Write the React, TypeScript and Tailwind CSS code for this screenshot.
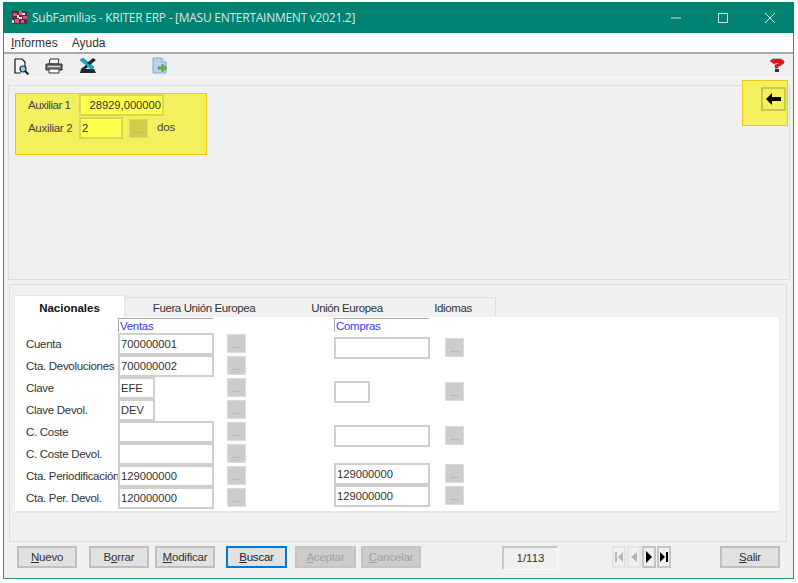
import React from "react";

const F = "font-['Liberation_Sans',Arial,sans-serif]";

function Input({ v = "", w = "w-[96px]", cls = "" }: { v?: string; w?: string; cls?: string }) {
  return (
    <div className={`${w} h-[22px] bg-white border-2 border-[#cfcfcf] pl-[1px] text-[11.2px] leading-[19px] text-[#333] ${cls}`}>{v}</div>
  );
}
function Dots({ cls = "" }: { cls?: string }) {
  return (
    <div className={`w-[19px] h-[19px] bg-[#cccccc] border border-[#dcdcdc] text-[#9a9a9a] text-[10px] leading-[20px] text-center ${cls}`}>...</div>
  );
}
function Row({ label, v, short }: { label: string; v?: string; short?: boolean }) {
  return (
    <div className="flex h-[22px] items-start">
      <div className="w-[92px] text-[11.5px] leading-[22px] text-[#333] -tracking-[0.3px] whitespace-nowrap">{label}</div>
      <div className="w-[109px] shrink-0">
        <Input v={v} w={short ? "w-[37px]" : "w-[96px]"} cls="px-[1px]" />
      </div>
      <Dots cls="mt-[1px]" />
    </div>
  );
}
function RRow({ v, short, mt }: { v?: string; short?: boolean; mt: string }) {
  return (
    <div className={`flex items-start h-[22px] ${mt}`}>
      <div className="w-[111px] shrink-0">
        <Input v={v} w={short ? "w-[36px]" : "w-[96px]"} />
      </div>
      <Dots cls="mt-[1px]" />
    </div>
  );
}
function Btn({ children, w = "w-[60px]", ml, state }: { children: React.ReactNode; w?: string; ml: string; state?: "focus" | "off" }) {
  const c =
    state === "focus"
      ? "border-2 border-[#0078d7] bg-[#e1e1e1] text-[#222]"
      : state === "off"
      ? "border-2 border-[#c4c4c4] bg-[#cccccc] text-[#a3a3a3]"
      : "border-2 border-[#c0c0c0] bg-[#e1e1e1] text-[#333]";
  return <div className={`${w} ${ml} h-[22px] ${c} text-[11.5px] leading-[18px] -tracking-[0.2px] text-center shrink-0`}>{children}</div>;
}
function Nav({ kind, on, ml }: { kind: "first" | "prev" | "next" | "last"; on?: boolean; ml: string }) {
  const col = on ? "#000" : "#b5b5b5";
  return (
    <div className={`w-[14px] h-[22px] ${ml} border-2 ${on ? "border-[#c4c4c4]" : "border-[#e4e4e4]"} flex items-center justify-center`}>
      <svg width="10" height="12" viewBox="0 0 10 12">
        {kind === "first" && <><rect x="1" y="1" width="2" height="10" fill={col} /><path d="M9 1v10L4 6z" fill={col} /></>}
        {kind === "prev" && <path d="M8 1v10L2 6z" fill={col} />}
        {kind === "next" && <path d="M2 0v12l6-6z" fill={col} />}
        {kind === "last" && <><rect x="7" y="1" width="2" height="10" fill={col} /><path d="M1 1v10l5-5z" fill={col} /></>}
      </svg>
    </div>
  );
}

export default function App() {
  return (
    <div className={`w-[798px] h-[583px] bg-white pt-[2px] pl-[3px] overflow-hidden ${F}`}>
      <div className="relative w-[791px] h-[577px] flex flex-col bg-[#f0f0f0] border-x border-b border-[#2f9488]">
        {/* title bar */}
        <div className="h-[31px] bg-[#008272] flex items-center shrink-0 -mx-[1px]">
          <svg className="ml-[8px]" width="17" height="15" viewBox="0 0 17 15">
            <rect x="1" y="1" width="15" height="13" fill="#5b2a3c" />
            <path d="M2 3h4v3H2zM8 1h3v4H8zM12 6h4v3h-4zM4 9h4v4H4zM10 10h3v3h-3z" fill="#e2557f" />
            <path d="M6 5h2v3H6zM11 3h3v2h-3zM1 10h2v3H1zM8 7h3v2H8z" fill="#f3e4ea" />
          </svg>
          <span className="ml-[4px] font-['Open_Sans',sans-serif] text-[12px] text-[#d5ebe7] -tracking-[0.26px] whitespace-nowrap">SubFamilias - KRITER ERP - [MASU ENTERTAINMENT v2021.2]</span>
          <div className="ml-auto flex items-center">
            <svg width="12" height="12" viewBox="0 0 12 12" className="mr-[35px]"><path d="M1 6h10" stroke="#cfe6e2" /></svg>
            <svg width="12" height="12" viewBox="0 0 12 12" className="mr-[35px]"><rect x="1.5" y="1.5" width="9" height="9" fill="none" stroke="#cfe6e2" /></svg>
            <svg width="12" height="12" viewBox="0 0 12 12" className="mr-[18px]"><path d="M1 1l10 10M11 1L1 11" stroke="#e4f1ef" /></svg>
          </div>
        </div>
        {/* menu */}
        <div className="h-[19px] bg-white flex items-center pl-[7px] text-[12px] text-[#333] shrink-0">
          <span><span className="underline">I</span>nformes</span>
          <span className="ml-[14px]">Ayuda</span>
        </div>
        <div className="h-[2px] bg-[#a9a9a9] shrink-0" />
        {/* toolbar */}
        <div className="h-[24px] flex items-center shrink-0 border-b border-[#fafafa]">
          <svg className="ml-[8px]" width="18" height="18" viewBox="0 0 18 18">
            <path d="M3 2h7l3 3v5M3 2v14h6" fill="#fff" stroke="#111" strokeWidth="1.2" />
            <circle cx="11" cy="12" r="3" fill="#8fd0e4" stroke="#223" strokeWidth="1.2" />
            <path d="M13 14l3.5 3.5" stroke="#111" strokeWidth="1.8" />
          </svg>
          <svg className="ml-[15px]" width="18" height="16" viewBox="0 0 18 16">
            <path d="M5 1h9l-1 5H4z" fill="#f2f2f2" stroke="#333" />
            <path d="M1 6h16v6H1z" fill="#777" stroke="#222" />
            <path d="M4 11h10v4H4z" fill="#fff" stroke="#333" />
            <path d="M3 8.5h12" stroke="#ddd" />
          </svg>
          <svg className="ml-[16px]" width="18" height="16" viewBox="0 0 18 16">
            <path d="M2 11h13l2 4H1z" fill="#1c2a30" />
            <path d="M1 2l3-2 11 9-2 3z" fill="#18a8c8" stroke="#0b5468" strokeWidth="0.5" />
            <path d="M14 0l3 2-6 5-3-2zM7 7l2 2-4 3-3-1z" fill="#1c2a30" />
          </svg>
          <svg className="ml-[55px]" width="16" height="17" viewBox="0 0 16 17">
            <path d="M1 1h9l4 4v11H1z" fill="#b8d4f0" stroke="#7ea6d8" />
            <path d="M10 1v4h4" fill="#e8f2fb" stroke="#7ea6d8" />
            <path d="M6 10h4V7l5 4-5 4v-3H6z" fill="#6fb04a" stroke="#4a8c30" strokeWidth="0.6" />
          </svg>
          <svg className="ml-auto mr-[8px]" width="16" height="15" viewBox="0 0 16 15">
            <path d="M1 3l3-2h8l3 2v2l-4 3H9v2H6V7l5-2H7L5 6z" fill="#ee1018" stroke="#555" strokeWidth="0.6" />
            <path d="M6 11h4v3H6z" fill="#333" />
          </svg>
        </div>
        {/* top panel */}
        <div className="relative h-[195px] ml-[4px] w-[782px] mt-[7px] border border-[#dcdcdc] shrink-0">
          <div className="ml-[6px] mt-[7px] w-[192px] h-[62px] bg-[#f2f05c] border border-[#f0c814] pl-[12px] text-[11.5px] text-[#444]">
            <div className="flex items-center h-[22px]">
              <span className="w-[51px] pt-[1px] -tracking-[0.5px]">Auxiliar 1</span>
              <div className="w-[85px] h-[22px] bg-[#ffff4d] border-2 border-[#d9d750] text-right pr-[1px] text-[11.2px] leading-[19px] text-[#333]">28929,000000</div>
            </div>
            <div className="flex items-center h-[22px] mt-[1px]">
              <span className="w-[51px] pt-[1px] -tracking-[0.3px]">Auxiliar 2</span>
              <div className="w-[44px] h-[22px] bg-[#ffff4d] border-2 border-[#d9d750] pl-[1px] text-[11.2px] leading-[19px] text-[#333]">2</div>
              <div className="ml-[6px] w-[19px] h-[19px] bg-[#cfcd4e] border border-[#dedc58] text-[10px] leading-[20px] text-center text-[#a5a34a]">...</div>
              <span className="ml-[9px] -tracking-[0.1px]">dos</span>
            </div>
          </div>
          {/* highlighted back button, drawn over the panel */}
          <div className="absolute right-[1px] -top-[6px] w-[46px] h-[46px] bg-[#f2f05c] border border-[#f0c814]">
            <div className="absolute left-[18px] top-[6px] w-[25px] h-[24px] border-2 border-[#c9c750] flex items-center justify-center">
              <svg width="15" height="12" viewBox="0 0 15 12"><path d="M0 6l6-6v4h9v4H6v4z" fill="#000" /></svg>
            </div>
          </div>
        </div>
        {/* bottom panel */}
        <div className="h-[258px] ml-[5px] w-[778px] mt-[4px] border border-[#dcdcdc] shrink-0 pl-[5px] pr-[9px] pt-[11px]">
          <div className="flex h-[21px] items-end text-[11.5px] text-[#333]">
            <div className="w-[110px] h-[22px] bg-white border-t border-r border-[#e4e4e4] text-center font-bold text-[#111] leading-[24px] z-10">Nacionales</div>
            <div className="w-[158px] h-[20px] border-t border-[#dcdcdc] text-center leading-[21px] -tracking-[0.4px]">Fuera Unión Europea</div>
            <div className="w-[128px] h-[20px] border-t border-[#dcdcdc] text-center leading-[21px] -tracking-[0.4px]">Unión Europea</div>
            <div className="w-[85px] h-[20px] border-t border-r border-[#dcdcdc] text-center leading-[21px] -tracking-[0.4px]">Idiomas</div>
          </div>
          <div className="h-[196px] w-[764px] bg-white border-b-2 border-[#e4e4e4] pl-[11px] pt-[1px] flex">
            <div className="w-[308px] shrink-0">
              <div className="ml-[92px] w-[95px] h-[14px] border-t border-l border-[#a8a8a8] text-[11.5px] leading-[14px] text-[#3a3af0] pl-[1px] -tracking-[0.3px]">Ventas</div>
              <div className="mt-[1px]">
                <Row label="Cuenta" v="700000001" />
                <Row label="Cta. Devoluciones" v="700000002" />
                <Row label="Clave" v="EFE" short />
                <Row label="Clave Devol." v="DEV" short />
                <Row label="C. Coste" />
                <Row label="C. Coste Devol." />
                <Row label="Cta. Periodificación" v="129000000" />
                <Row label="Cta. Per. Devol." v="120000000" />
              </div>
            </div>
            <div>
              <div className="w-[95px] h-[14px] border-t border-l border-[#a8a8a8] text-[11.5px] leading-[14px] text-[#3a3af0] pl-[1px] -tracking-[0.3px]">Compras</div>
              <RRow mt="mt-[5px]" />
              <RRow mt="mt-[22px]" short />
              <RRow mt="mt-[22px]" />
              <RRow mt="mt-[16px]" v="129000000" />
              <RRow mt="mt-[0px]" v="129000000" />
            </div>
          </div>
        </div>
        {/* footer */}
        <div className="flex items-start mt-[4px] h-[24px]">
          <Btn ml="ml-[13px]"><span className="underline">N</span>uevo</Btn>
          <Btn ml="ml-[12px]">B<span className="underline">o</span>rrar</Btn>
          <Btn ml="ml-[6px]"><span className="underline">M</span>odificar</Btn>
          <Btn ml="ml-[11px]" w="w-[61px]" state="focus"><span className="underline">B</span>uscar</Btn>
          <Btn ml="ml-[8px]" w="w-[61px]" state="off"><span className="underline">A</span>ceptar</Btn>
          <Btn ml="ml-[5px]" state="off"><span className="underline">C</span>ancelar</Btn>
          <div className="ml-[81px] w-[56px] h-[24px] border-t-2 border-l-2 border-[#c8c8c8] border-r border-b border-r-[#fafafa] border-b-[#fafafa] text-center text-[11.5px] leading-[20px] text-[#333]">1/113</div>
          <Nav kind="first" ml="ml-[54px]" />
          <Nav kind="prev" ml="ml-[1px]" />
          <Nav kind="next" ml="ml-[1px]" on />
          <Nav kind="last" ml="ml-[1px]" on />
          <Btn ml="ml-[49px]"><span className="underline">S</span>alir</Btn>
        </div>
      </div>
    </div>
  );
}
